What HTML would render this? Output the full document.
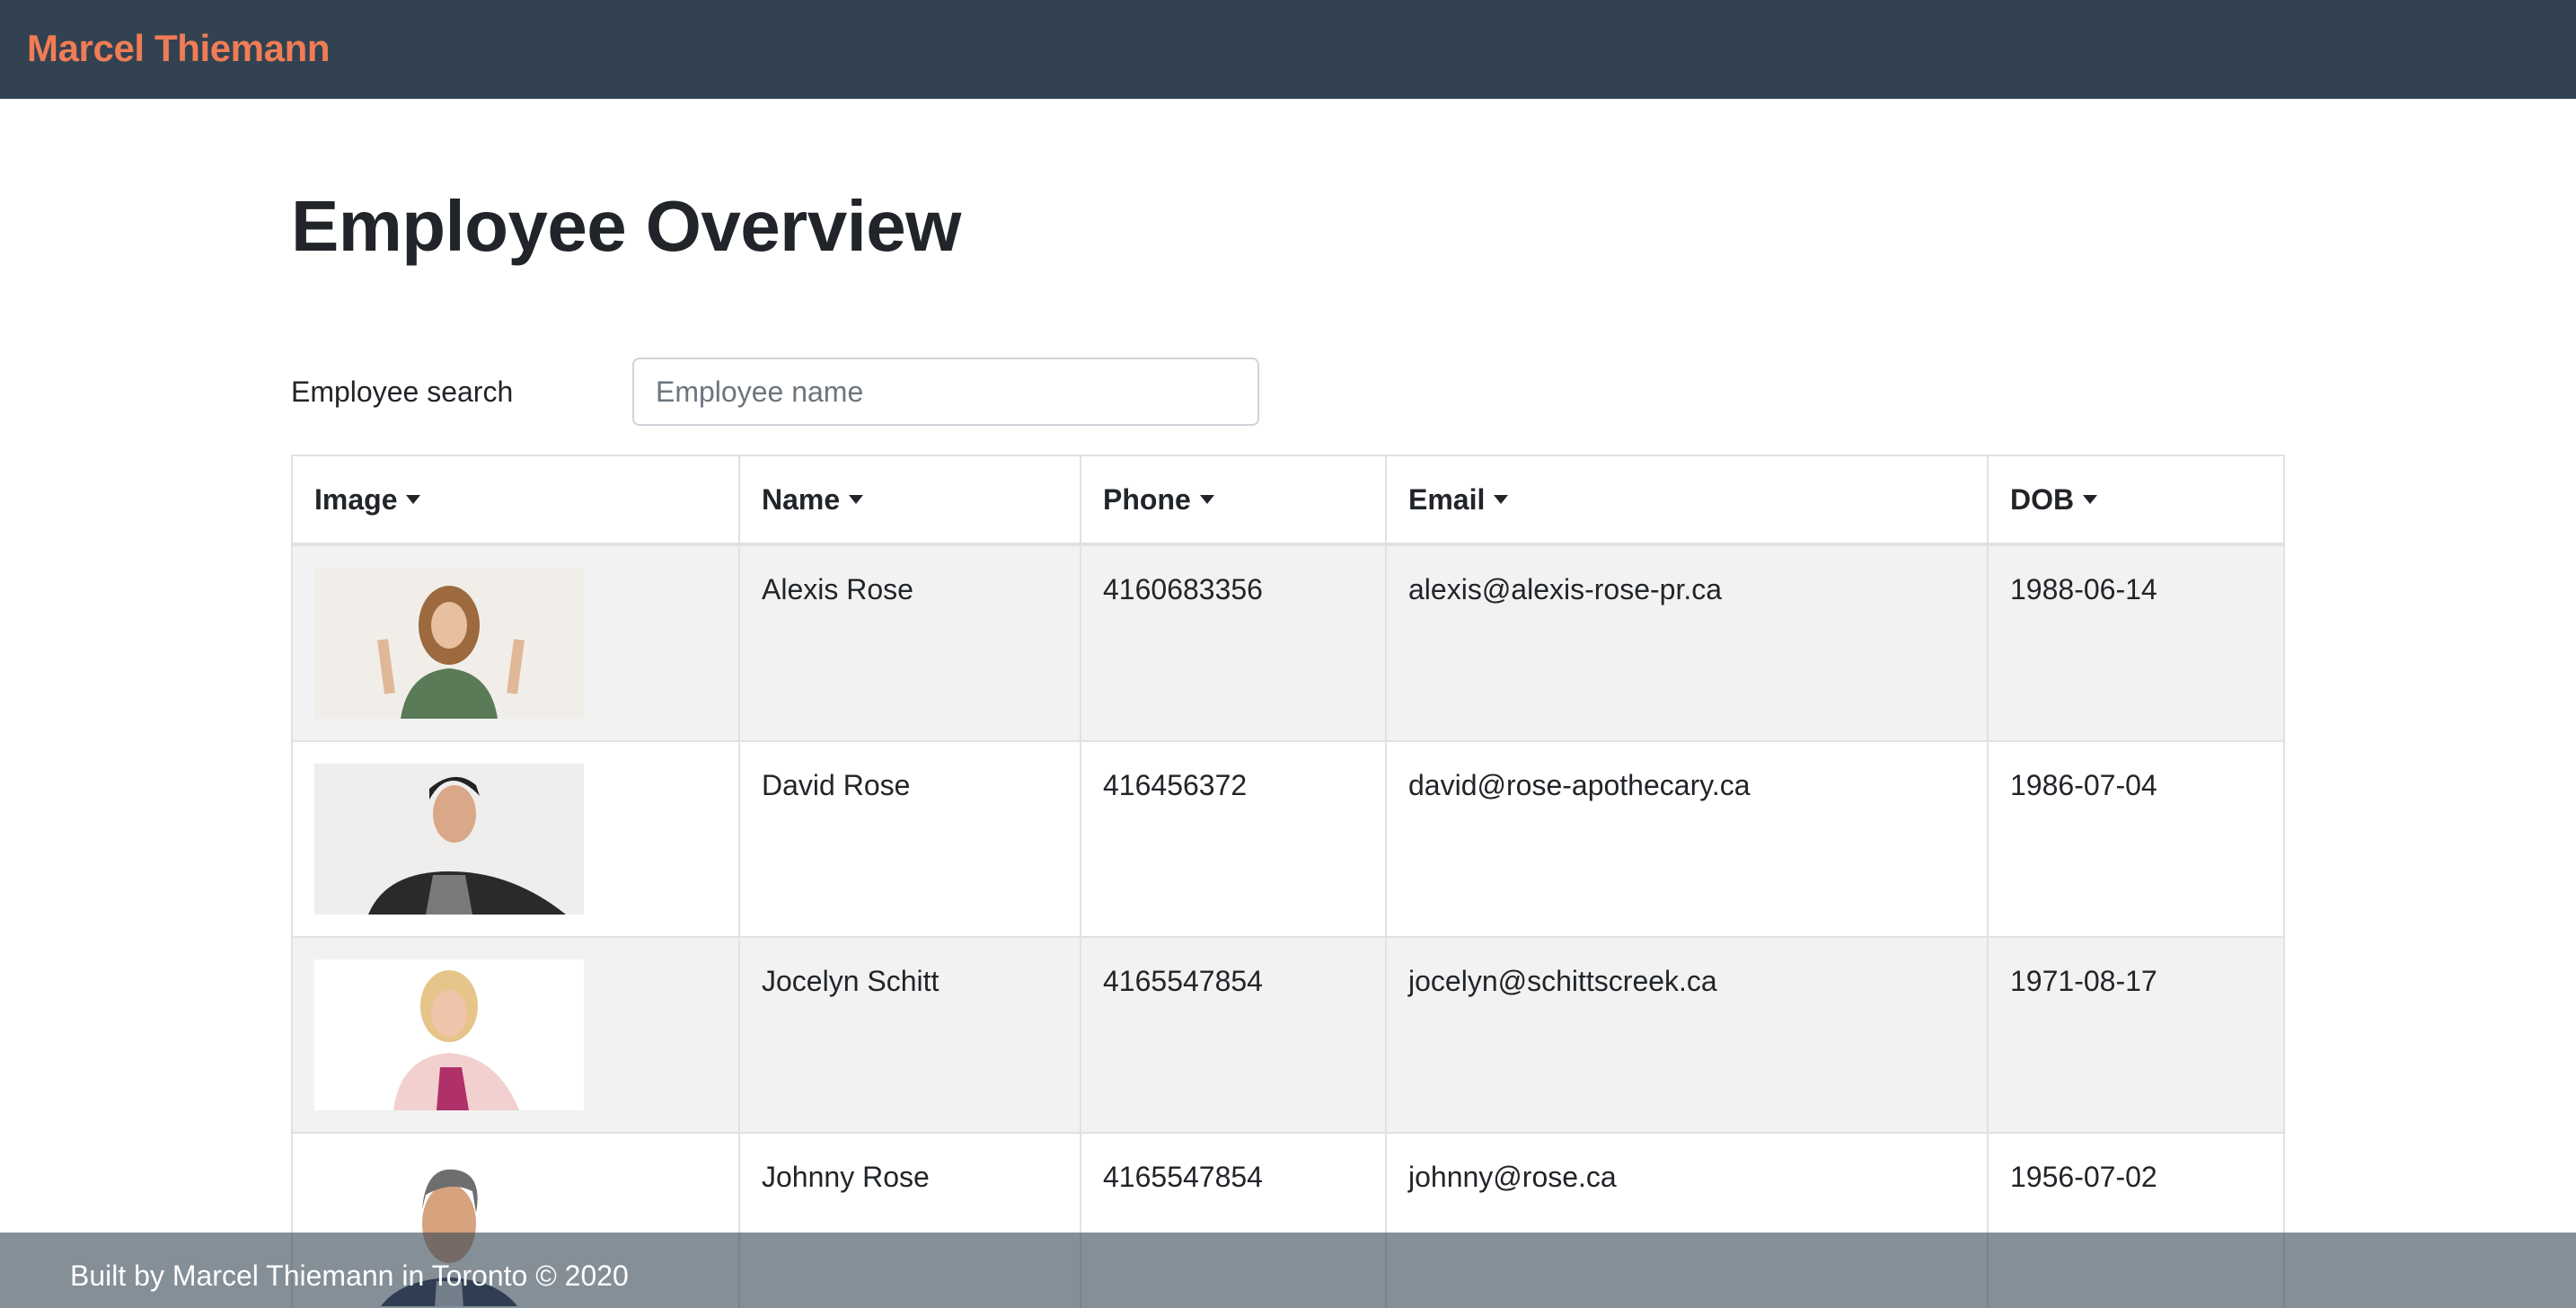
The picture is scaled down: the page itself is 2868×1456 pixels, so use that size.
<!DOCTYPE html>
<html><head><meta charset="utf-8"><style>
html{zoom:2;overflow:hidden;height:728px}
body{margin:0;font-family:"Liberation Sans",sans-serif;color:#212529;background:#fff;width:1434px;height:728px;overflow:hidden;position:relative}
.nav{height:55px;background:#324251;position:relative}
.brand{position:absolute;left:15px;top:15px;font-size:21px;font-weight:bold;color:#f07c56;letter-spacing:-0.2px}
h1{position:absolute;left:162px;top:102px;margin:0;font-size:40px;line-height:48px;font-weight:bold;letter-spacing:-0.3px}
.lab{position:absolute;left:162px;top:206px;font-size:16px;line-height:24px}
.inp{position:absolute;left:352px;top:199px;width:349px;height:38px;box-sizing:border-box;border:1px solid #ced4da;border-radius:4px;padding:0 12px;font-size:16px;line-height:36px;color:#6c757d}
table{position:absolute;left:162px;top:253px;width:1110px;border-collapse:collapse;font-size:16px}
td,th{border:1px solid #dee2e6;padding:12px;text-align:left;vertical-align:top;line-height:24px}
th{height:24px;border-bottom:2px solid #dee2e6}
td{height:84px}
tr.s td{background:#f2f2f2}
.car{display:inline-block;width:0;height:0;border-left:4px solid transparent;border-right:4px solid transparent;border-top:5px solid #212529;vertical-align:middle;margin-left:5px;margin-top:-3px}
.img{display:block;width:150px;height:84px}
.foot{position:absolute;left:0;top:686px;width:1434px;height:42px;background:rgba(52,68,84,0.6);color:#fff;font-size:16px;line-height:42px;padding-left:39px;padding-top:3px;box-sizing:border-box}
</style></head><body>
<div class="nav"><div class="brand">Marcel Thiemann</div></div>
<h1>Employee Overview</h1>
<div class="lab">Employee search</div>
<div class="inp">Employee name</div>
<table>
<colgroup><col style="width:249px"><col style="width:190px"><col style="width:170px"><col style="width:335px"><col style="width:165px"></colgroup>
<tr><th>Image<span class="car"></span></th><th>Name<span class="car"></span></th><th>Phone<span class="car"></span></th><th>Email<span class="car"></span></th><th>DOB<span class="car"></span></th></tr>
<tr class="s"><td><svg class="img" viewBox="0 0 150 84"><rect width="150" height="84" fill="#f1eeea"/><path d="M48 84 Q52 58 75 56 Q98 58 102 84Z" fill="#5b7a58"/><ellipse cx="75" cy="32" rx="17" ry="22" fill="#9c6a3e"/><ellipse cx="75" cy="32" rx="10" ry="13" fill="#e8c0a0"/><path d="M42 70 L38 40 M110 70 L114 40" stroke="#e0b898" stroke-width="6"/></svg></td><td>Alexis Rose</td><td>4160683356</td><td>alexis@alexis-rose-pr.ca</td><td>1988-06-14</td></tr>
<tr><td><svg class="img" viewBox="0 0 150 84"><rect width="150" height="84" fill="#efeeec"/><path d="M30 84 Q40 60 75 60 Q110 60 140 84Z" fill="#2a2a2a"/><path d="M62 84 L66 62 L84 62 L88 84Z" fill="#7a7a7a"/><ellipse cx="78" cy="28" rx="12" ry="16" fill="#d9a888"/><path d="M64 20 Q75 0 92 18 L90 12 Q78 2 64 14Z" fill="#222"/></svg></td><td>David Rose</td><td>416456372</td><td>david@rose-apothecary.ca</td><td>1986-07-04</td></tr>
<tr class="s"><td><svg class="img" viewBox="0 0 150 84"><rect width="150" height="84" fill="#fff"/><path d="M44 84 Q48 54 75 52 Q102 54 114 84Z" fill="#f2d0cf"/><path d="M68 84 L70 60 L82 60 L86 84Z" fill="#b0306a"/><ellipse cx="75" cy="26" rx="16" ry="20" fill="#e6c48a"/><ellipse cx="75" cy="30" rx="10" ry="13" fill="#f0c4aa"/></svg></td><td>Jocelyn Schitt</td><td>4165547854</td><td>jocelyn@schittscreek.ca</td><td>1971-08-17</td></tr>
<tr><td><svg class="img" viewBox="0 0 150 84"><rect width="150" height="84" fill="#fff"/><path d="M30 100 Q36 70 75 68 Q114 70 120 100Z" fill="#2a3550"/><path d="M66 100 L68 70 L82 70 L84 100Z" fill="#cfd6de"/><ellipse cx="75" cy="38" rx="15" ry="22" fill="#d7a27e"/><path d="M60 30 Q62 6 78 8 Q94 10 90 32 L88 20 Q76 14 62 22Z" fill="#6e6e6e"/></svg></td><td>Johnny Rose</td><td>4165547854</td><td>johnny@rose.ca</td><td>1956-07-02</td></tr>
</table>
<div class="foot">Built by Marcel Thiemann in Toronto © 2020</div>
</body></html>
